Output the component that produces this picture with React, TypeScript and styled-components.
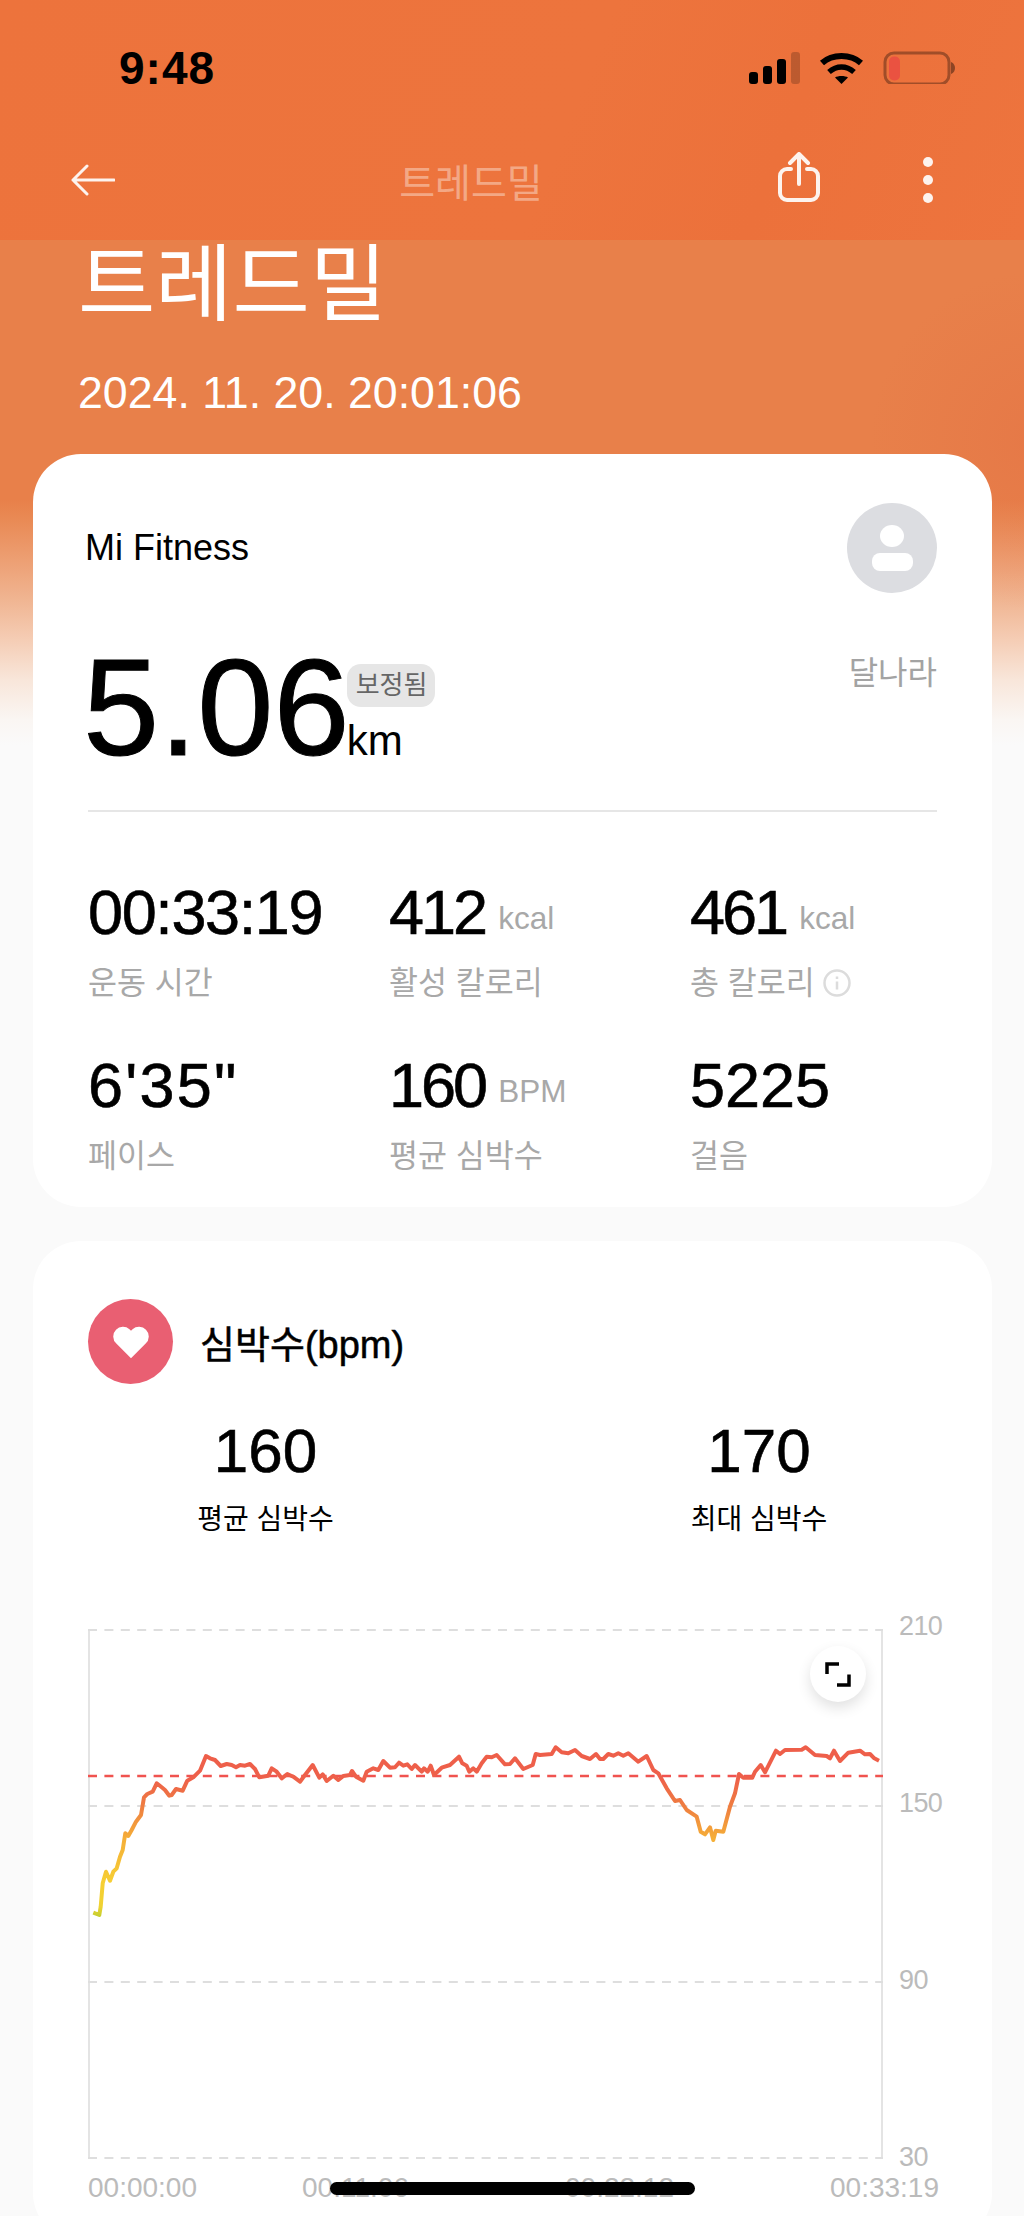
import styled, { createGlobalStyle } from 'styled-components';

const GlobalStyle = createGlobalStyle`
  html, body {
    margin: 0;
    padding: 0;
    background: #fafafa;
  }
  * {
    box-sizing: border-box;
  }
`;

const fontStack = `"Liberation Sans", "Noto Sans CJK KR", sans-serif`;

const Page = styled.div`
  position: relative;
  width: 1024px;
  height: 2216px;
  overflow: hidden;
  font-family: ${fontStack};
  color: #000;
  background:
    radial-gradient(circle at 1040px 440px, rgba(225, 105, 65, 0.32) 0, rgba(225, 105, 65, 0) 170px),
    linear-gradient(
      180deg,
      #e8804a 0,
      #e8804a 500px,
      #e98a55 520px,
      #ed9f73 560px,
      #f0b592 600px,
      #f5cdb5 640px,
      #f8e6da 680px,
      #faf6f3 720px,
      #fafafa 745px
    );
`;

const TopBar = styled.header`
  height: 240px;
  background: linear-gradient(112deg, #ed733c 0, #ed743d 55%, #ec713b 75%, #ed743e 100%);
`;

const StatusBar = styled.div`
  height: 110px;
  padding: 48px 69px 0 119px;
  display: flex;
  justify-content: space-between;
  align-items: flex-start;
`;

const Clock = styled.div`
  margin-top: -3px;
  font-size: 46px;
  line-height: 46px;
  font-weight: 700;
  letter-spacing: 1px;
`;

const NavBar = styled.nav`
  height: 130px;
  padding: 10px 91px 0 71px;
  display: grid;
  grid-template-columns: 44px 663px 42px 1fr auto;
  align-items: center;
`;

const NavTitle = styled.div`
  padding-left: 49px;
  font-size: 39px;
  text-align: center;
  color: rgba(255, 255, 255, 0.4);
`;

const MoreDots = styled.div`
  grid-column: 5;
  display: flex;
  flex-direction: column;
  gap: 8px;
  align-items: center;
  & > span {
    width: 10px;
    height: 10px;
    flex: none;
    border-radius: 50%;
    background: #fdf3ee;
  }
`;

const Hero = styled.section`
  height: 214px;
  padding-left: 78px;
  color: #fff;
`;

const HeroTitle = styled.h1`
  margin: 0;
  font-size: 84px;
  line-height: 90px;
  font-weight: 400;
`;

const HeroDate = styled.div`
  margin-top: 39px;
  font-size: 44.7px;
  line-height: 48px;
`;

const Card = styled.section`
  margin: 0 32px 34px 33px;
  background: #fff;
  border-radius: 48px;
`;

const SummaryCard = styled(Card)`
  height: 753px;
  padding: 49px 55px 0;
`;

const SummaryTop = styled.div`
  display: grid;
  grid-template-columns: 1fr auto;
  height: 309px;
  border-bottom: 2px solid #e6e6e6;
`;

const SourceName = styled.div`
  margin-top: 25px;
  margin-left: -3px;
  font-size: 36px;
  line-height: 40px;
`;

const Avatar = styled.div`
  width: 90px;
  height: 90px;
  border-radius: 50%;
  background: #dcdde1;
  display: flex;
  flex-direction: column;
  align-items: center;
  justify-content: center;
  gap: 6px;
  & > i:first-child {
    width: 24px;
    height: 22px;
    border-radius: 50%;
    background: #fff;
  }
  & > i:last-child {
    width: 41px;
    height: 18px;
    border-radius: 8px;
    background: #fff;
  }
`;

const DistanceBlock = styled.div`
  display: flex;
  align-items: flex-start;
  height: 150px;
  margin-top: 67px;
`;

const DistanceValue = styled.div`
  margin-left: -5px;
  margin-top: 4px;
  font-size: 137px;
  line-height: 137px;
  -webkit-text-stroke: 1px #000;
`;

const DistanceSide = styled.div`
  display: flex;
  flex-direction: column;
  align-items: flex-start;
  margin-left: -3px;
  padding-top: 29px;
`;

const Badge = styled.span`
  height: 43px;
  padding: 0 8px 0 9px;
  border-radius: 14px;
  background: #e6e6e6;
  color: #666;
  font-size: 26px;
  line-height: 42px;
`;

const Unit = styled.span`
  margin-top: 11px;
  font-size: 42px;
  line-height: 46px;
`;

const DeviceName = styled.div`
  margin-top: 60px;
  font-size: 32px;
  line-height: 40px;
  color: #a3a3a3;
  text-align: right;
`;

const StatsGrid = styled.div`
  display: grid;
  grid-template-columns: 301px 301px 1fr;
  row-gap: 46px;
  margin-top: 65px;
`;

const Stat = styled.div`
  display: flex;
  flex-direction: column;
`;

const StatValue = styled.div<{ $track?: number }>`
  height: 70px;
  font-size: 63px;
  line-height: 70px;
  letter-spacing: ${(p) => p.$track ?? 0}px;
  white-space: nowrap;
  -webkit-text-stroke: 0.6px #000;
`;

const StatUnit = styled.span`
  margin-left: 13px;
  font-size: 31.5px;
  line-height: 1;
  letter-spacing: 0;
  vertical-align: 5px;
  color: #a8a8a8;
  -webkit-text-stroke: 0;
`;

const StatLabel = styled.div`
  margin-top: 15px;
  font-size: 31.5px;
  line-height: 42px;
  color: #a8a8a8;
  display: flex;
  align-items: center;
  gap: 8px;
`;

const HeartCard = styled(Card)`
  height: 1000px;
  padding: 58px 55px 0;
`;

const HeartHeader = styled.div`
  display: flex;
  align-items: center;
  gap: 27px;
`;

const HeartBadge = styled.div`
  width: 85px;
  height: 85px;
  border-radius: 50%;
  background: #e95f72;
  display: flex;
  align-items: center;
  justify-content: center;
`;

const HeartTitle = styled.h2`
  margin: 0;
  font-size: 38px;
  font-weight: 400;
  -webkit-text-stroke: 0.5px #000;
`;

const HeartSummary = styled.div`
  display: grid;
  grid-template-columns: 355px 330px;
  justify-content: start;
  gap: 151px;
  margin-top: 31px;
  text-align: center;
`;

const HeartValue = styled.div`
  font-size: 62px;
  line-height: 72px;
  -webkit-text-stroke: 0.6px #000;
`;

const HeartLabel = styled.div`
  margin-top: 13px;
  font-size: 28px;
  line-height: 40px;
`;

const ChartWrap = styled.div`
  margin-top: 89px;
  display: grid;
  grid-template-columns: 795px 1fr;
  grid-template-rows: 530px auto;
`;

const Plot = styled.div`
  position: relative;
  width: 795px;
  height: 530px;
`;

const ExpandButton = styled.div`
  position: absolute;
  top: 17px;
  right: 17px;
  width: 56px;
  height: 56px;
  border-radius: 50%;
  background: #fff;
  box-shadow: 0 6px 14px rgba(0, 0, 0, 0.12);
  display: flex;
  align-items: center;
  justify-content: center;
`;

const YAxis = styled.div`
  display: flex;
  flex-direction: column;
  justify-content: space-between;
  padding-left: 16px;
  margin: -20px 0 -15px;
  font-size: 27px;
  line-height: 34px;
  letter-spacing: -0.6px;
  color: #bbb;
`;

const XAxis = styled.div`
  grid-column: 1 / 3;
  display: grid;
  grid-template-columns: 214px 263px 265px auto;
  margin-top: 12px;
  font-size: 28px;
  line-height: 34px;
  color: #bbb;
`;

const HomeBar = styled.div`
  position: absolute;
  left: 330px;
  bottom: 21px;
  width: 365px;
  height: 13px;
  border-radius: 7px;
  background: #000;
`;

const Icon = styled.svg`
  display: block;
  flex: none;
`;

const ShareIcon = styled(Icon)`
  margin-bottom: 6px;
`;

const raw4 = [
  [100, 938], [118, 945], [122, 920], [128, 850], [138, 815], [150, 842], [160, 815], [170, 805],
  [180, 770], [188, 750], [196, 700], [205, 708], [215, 690], [228, 665], [243, 645], [252, 592],
  [262, 582], [278, 575], [290, 550], [305, 562], [315, 570], [328, 587], [335, 585], [348, 567],
  [368, 572], [382, 542], [400, 532], [420, 512], [438, 468], [450, 475], [465, 480], [482, 498],
  [500, 492], [515, 495], [528, 502], [540, 495], [555, 497], [570, 492], [585, 507], [598, 532],
  [625, 527], [635, 505], [650, 515], [665, 535], [682, 522], [700, 530], [720, 545], [735, 525],
  [758, 495], [778, 533], [788, 523], [800, 543], [820, 527], [835, 540], [850, 528], [870, 525],
  [876, 513], [888, 530], [910, 542], [920, 515], [940, 505], [955, 510], [970, 483], [990, 503],
  [1005, 502], [1017, 488], [1030, 497], [1042, 493], [1055, 507], [1065, 495], [1085, 515],
  [1092, 505], [1103, 515], [1112, 497], [1122, 525], [1145, 503], [1170, 495], [1197, 470],
  [1207, 490], [1220, 497], [1228, 515], [1240, 505], [1250, 515], [1265, 490], [1280, 470],
  [1295, 472], [1310, 465], [1335, 493], [1350, 492], [1365, 475], [1390, 507], [1418, 495],
  [1427, 462],
];

const raw5 = [
  [0, 465], [35, 462], [47, 442], [65, 457], [85, 460], [105, 450], [125, 468], [150, 477],
  [168, 462], [180, 477], [190, 477], [205, 462], [220, 467], [235, 460], [250, 467], [265, 460],
  [295, 485], [320, 468], [340, 510], [355, 520], [380, 565], [405, 603], [420, 600], [440, 630],
  [470, 650], [482, 695], [495, 703], [510, 682], [520, 720], [527, 692], [550, 695], [570, 620],
  [585, 580], [597, 522], [610, 533], [637, 533], [645, 515], [662, 495], [675, 517], [708, 452],
  [720, 462], [735, 450], [785, 449], [797, 442], [825, 465], [860, 468], [870, 475], [882, 452],
  [900, 483], [925, 458], [960, 452], [975, 463], [990, 462], [1003, 475], [1017, 482],
];

// plot svg origin sits at page (88, 1629)
const heartLine = [
  ...raw4.map(([x, y]) => [x / 3 + 60 - 88, y / 3 + 1600 - 1629]),
  ...raw5.map(([x, y]) => [x / 3 + 540 - 88, y / 3 + 1600 - 1629]),
]
  .map(([x, y]) => `${x.toFixed(1)},${y.toFixed(1)}`)
  .join(' ');

const gridRows = [1, 177, 353, 529];

const App = () => {
  return (
    <Page>
      <GlobalStyle />
      <TopBar>
        <StatusBar>
          <Clock>9:48</Clock>
          <Icon width="206" height="36" viewBox="0 0 206 36">
            <rect x="0" y="24" width="9" height="12" rx="3" fill="#000" />
            <rect x="14" y="18" width="9" height="18" rx="3" fill="#000" />
            <rect x="28" y="11" width="9" height="25" rx="3" fill="#000" />
            <rect x="42" y="4" width="9" height="32" rx="3" fill="#000" opacity="0.2" />
            <path d="M73 15C78 10.500 84 8 92.500 8S107 10.500 112 15" fill="none" stroke="#000" strokeWidth="6" />
            <path d="M80 24C84 20.500 88 19 92.500 19S101 20.500 105 24" fill="none" stroke="#000" strokeWidth="5.500" />
            <path d="M86 29.500C89 27.500 96 27.500 99 29.500L92.500 36Z" fill="#000" />
            <rect x="136" y="5" width="64" height="31" rx="9" fill="none" stroke="#000" strokeOpacity="0.32" strokeWidth="3" />
            <rect x="140" y="8.500" width="11" height="24" rx="5" fill="#ea5241" />
            <path d="M202 14C205 15 206 18 206 20S205 25 202 26Z" fill="#000" fillOpacity="0.4" />
          </Icon>
        </StatusBar>
        <NavBar>
          <Icon width="44" height="32" viewBox="0 0 44 32" fill="none" stroke="#fdf3ee" strokeWidth="3" strokeLinecap="round" strokeLinejoin="round">
            <path d="M16 2 2 16l14 14M2 16h41" />
          </Icon>
          <NavTitle>트레드밀</NavTitle>
          <ShareIcon width="42" height="50" viewBox="0 0 42 50" fill="none" stroke="#fdf3ee" strokeWidth="4" strokeLinecap="round" strokeLinejoin="round">
            <path d="M13 17H9a7 7 0 0 0-7 7v17a7 7 0 0 0 7 7h24a7 7 0 0 0 7-7V24a7 7 0 0 0-7-7h-4" />
            <path d="M21 32V3M12 11l9-9 9 9" />
          </ShareIcon>
          <MoreDots>
            <span />
            <span />
            <span />
          </MoreDots>
        </NavBar>
      </TopBar>

      <Hero>
        <HeroTitle>트레드밀</HeroTitle>
        <HeroDate>2024. 11. 20. 20:01:06</HeroDate>
      </Hero>

      <SummaryCard>
        <SummaryTop>
          <div>
            <SourceName>Mi Fitness</SourceName>
            <DistanceBlock>
              <DistanceValue>5.06</DistanceValue>
              <DistanceSide>
                <Badge>보정됨</Badge>
                <Unit>km</Unit>
              </DistanceSide>
            </DistanceBlock>
          </div>
          <div>
            <Avatar>
              <i />
              <i />
            </Avatar>
            <DeviceName>달나라</DeviceName>
          </div>
        </SummaryTop>

        <StatsGrid>
          <Stat>
            <StatValue $track={-1.4}>00:33:19</StatValue>
            <StatLabel>운동 시간</StatLabel>
          </Stat>
          <Stat>
            <StatValue $track={-3}>412<StatUnit>kcal</StatUnit></StatValue>
            <StatLabel>활성 칼로리</StatLabel>
          </Stat>
          <Stat>
            <StatValue $track={-3}>461<StatUnit>kcal</StatUnit></StatValue>
            <StatLabel>
              총 칼로리
              <Icon width="28" height="28" viewBox="0 0 28 28" fill="none" stroke="#dcdcdc" strokeWidth="2.500">
                <circle cx="14" cy="14" r="12.500" />
                <path d="M14 12.500v8M14 7.500v2.500" />
              </Icon>
            </StatLabel>
          </Stat>
          <Stat>
            <StatValue $track={2.2}>6'35"</StatValue>
            <StatLabel>페이스</StatLabel>
          </Stat>
          <Stat>
            <StatValue $track={-3}>160<StatUnit>BPM</StatUnit></StatValue>
            <StatLabel>평균 심박수</StatLabel>
          </Stat>
          <Stat>
            <StatValue>5225</StatValue>
            <StatLabel>걸음</StatLabel>
          </Stat>
        </StatsGrid>
      </SummaryCard>

      <HeartCard>
        <HeartHeader>
          <HeartBadge>
            <Icon width="38" height="34" viewBox="0 0 24 22">
              <path d="M12 21.500 2.500 12A6.300 6.300 0 0 1 2.300 3 6.300 6.300 0 0 1 11 2.700l1 1 1-1a6.300 6.300 0 0 1 8.700.3 6.300 6.300 0 0 1-.2 9Z" fill="#fff" />
            </Icon>
          </HeartBadge>
          <HeartTitle>심박수(bpm)</HeartTitle>
        </HeartHeader>

        <HeartSummary>
          <div>
            <HeartValue>160</HeartValue>
            <HeartLabel>평균 심박수</HeartLabel>
          </div>
          <div>
            <HeartValue>170</HeartValue>
            <HeartLabel>최대 심박수</HeartLabel>
          </div>
        </HeartSummary>

        <ChartWrap>
          <Plot>
            <svg width="795" height="530" viewBox="0 0 795 530">
              <defs>
                <linearGradient id="hrStroke" gradientUnits="userSpaceOnUse" x1="0" y1="110" x2="0" y2="290">
                  <stop offset="0" stopColor="#ee5e4a" />
                  <stop offset="0.22" stopColor="#ee604a" />
                  <stop offset="0.38" stopColor="#ef7f40" />
                  <stop offset="0.55" stopColor="#f5ae38" />
                  <stop offset="0.8" stopColor="#f6cf34" />
                  <stop offset="0.93" stopColor="#f0d232" />
                  <stop offset="0.98" stopColor="#c8cf30" />
                </linearGradient>
              </defs>
              <path d="M1 0V530M794 0V530" stroke="#e4e4e4" strokeWidth="2" />
              {gridRows.map((y) => (
                <line key={y} x1="0" x2="795" y1={y} y2={y} stroke="#dedede" strokeWidth="2" strokeDasharray="9 7.400" />
              ))}
              <line x1="0" x2="795" y1="147" y2="147" stroke="#f0534f" strokeWidth="2.500" strokeDasharray="9 7.400" />
              <polyline points={heartLine} fill="none" stroke="url(#hrStroke)" strokeWidth="4" strokeLinejoin="round" />
            </svg>
            <ExpandButton>
              <Icon width="26" height="25" viewBox="0 0 26 25" fill="none" stroke="#000" strokeWidth="3.500">
                <path d="M2 12V2h12M24 12.500v10.500H12" />
              </Icon>
            </ExpandButton>
          </Plot>
          <YAxis>
            <span>210</span>
            <span>150</span>
            <span>90</span>
            <span>30</span>
          </YAxis>
          <XAxis>
            <span>00:00:00</span>
            <span>00:11:06</span>
            <span>00:22:12</span>
            <span>00:33:19</span>
          </XAxis>
        </ChartWrap>
      </HeartCard>

      <HomeBar />
    </Page>
  );
};

export default App;
